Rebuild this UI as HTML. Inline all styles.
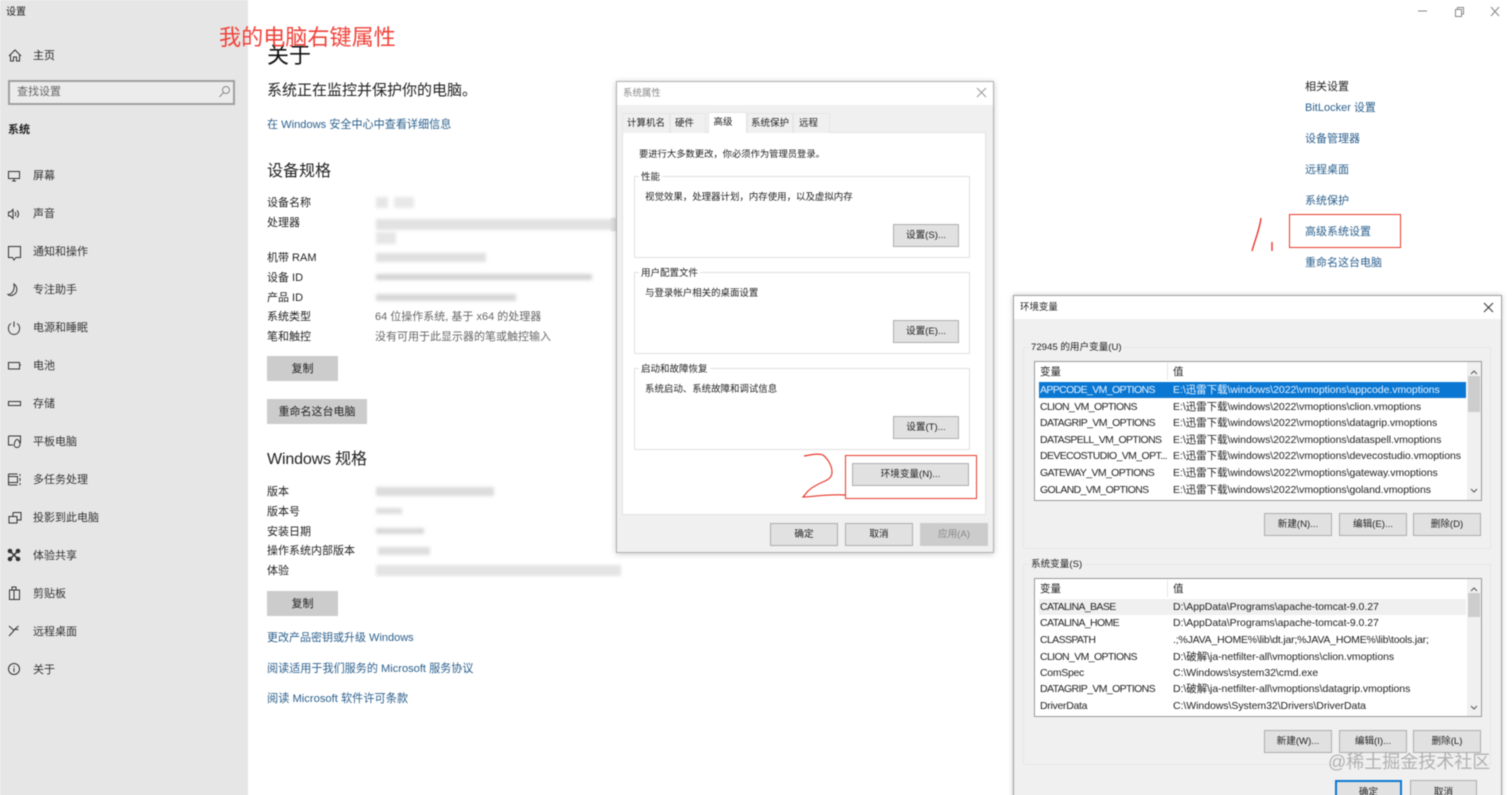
<!DOCTYPE html>
<html lang="zh-CN"><head><meta charset="utf-8"><title>设置</title>
<style>
html,body{margin:0;padding:0;width:1512px;height:795px;overflow:hidden;background:#fff}
#r{position:relative;width:1520px;height:803px;overflow:hidden;font-family:"Liberation Sans","Noto Sans CJK SC",sans-serif;color:#222;filter:blur(.5px);background:#fff}
#r div,#r svg{position:absolute}
.t{white-space:nowrap;line-height:20px;height:20px;font-size:11px;transform:translateY(1px)}
.d{font-size:9.450px;transform:translateY(2px)}
.d2{transform:translateY(1px)}
.l{color:#2b5f8c}
.g{color:#666}
.n{color:#333;left:33px}
.b{background:#e1e1e1;border:1px solid #adadad;box-sizing:border-box;text-align:center;font-size:9.600px;line-height:22px;height:23px;white-space:nowrap;color:#222}
.s{background:#ccc;text-align:center;font-size:11px;line-height:26px;height:25px;color:#222;white-space:nowrap}
.gr{border:1px solid #e0e0e0;box-sizing:border-box}
.lg{font-size:9.500px;line-height:14px;height:14px;white-space:nowrap;padding:0 2px;color:#222;transform:translateY(1px)}
.lg2{font-size:9.600px;transform:translateY(1px)}
.tab{background:#f0f0f0;border:1px solid #e6e6e6;border-bottom:0;box-sizing:border-box;font-size:9.500px;line-height:19px;text-align:center;white-space:nowrap;height:20px}
.w{font-size:10.500px;line-height:16px;height:16px;white-space:nowrap;color:#222;letter-spacing:-.05px}
.c{letter-spacing:-.62px}
.bl{filter:blur(1.6px)}
</style></head><body><div id="r">

<div style="left:0;top:0;width:248px;height:803px;background:#e6e6e6"></div>
<div class="t" style="left:6px;top:2px;font-size:10px">设置</div>

<div class="t" style="left:33px;top:45px">主页</div>
<div style="left:8px;top:80px;width:227px;height:25px;border:2px solid #a0a0a0;background:#ececec;box-sizing:border-box"></div>
<div class="t" style="left:17px;top:81px;color:#666">查找设置</div>
<svg style="left:218px;top:85px" width="14" height="14" fill="none" stroke="#8a8a8a"><circle cx="8" cy="5" r="3.500"/><path d="M5.500 7.500 1.500 12"/></svg>

<svg style="left:0;top:0" width="30" height="690" viewBox="0 0 30 690" fill="none" stroke="#333" stroke-width="1">
<path d="M9 56 15 50 21 56M10.500 55V61H13.500V57H16.500V61H19.500V55"/>
<path d="M8.500 171.500H19.500V178.500H8.500ZM12 181H16M14 179V181"/>
<path d="M8.500 212V216H10.500L13 218.500V209.500L10.500 212ZM15 212C16 213 16 215 15 216M17 210.500C19 212.500 19 215.500 17 217.500"/>
<path d="M8.500 246.500H20.500V257.500H16L14 260 12.500 257.500H8.500Z"/>
<path d="M14 284C18 287 18 293 13 295 11 296 9 295.500 8 294.500 12 294.500 15 290 14 284Z"/>
<path d="M11 323.500C6.500 326 8 334.500 14 334.500 20 334.500 21.500 326 17 323.500M14 321.500V327"/>
<path d="M8.500 362.500H19.500V369H8.500ZM19.500 365H21"/>
<path d="M8.500 401.500H20.500V405.500H8.500Z"/>
<path d="M8.500 436H20.500V443M8.500 436V445H13M15 441.500C17 437 19.500 441 20 443.500 20.500 448 15 449 14 445Z"/>
<path d="M8.500 474H17.500M8.500 485H17.500M8.500 474V485M17.500 476.500V482.500H8.500V476.500ZM20 474V476M20 478V481M20 483V485"/>
<path d="M13 512.500H21V520H17M9 516.500H17V523H9ZM13 512.500V516.500"/>
<path d="M11 552 17 558M17 552 11 558" stroke-width="1.500"/>
<circle cx="10" cy="551" r="1.800" fill="#333"/><circle cx="18" cy="551" r="1.800" fill="#333"/><circle cx="10" cy="559" r="1.800" fill="#333"/><circle cx="18" cy="559" r="1.800" fill="#333"/>
<path d="M9.500 590H19.500V599.500H9.500ZM12 590V587H16V590M14 590V599.500"/>
<path d="M9 626 14 630.500 9 636M18.500 626 14.500 629.500 18.500 629.500"/>
<circle cx="14" cy="669" r="5.500"/><path d="M14 668V672M14 666V667"/>
</svg>

<div class="t" style="left:8px;top:119px;font-weight:bold;font-size:11px">系统</div>
<div class="t n" style="top:165px">屏幕</div>
<div class="t n" style="top:203px">声音</div>
<div class="t n" style="top:241px">通知和操作</div>
<div class="t n" style="top:279px">专注助手</div>
<div class="t n" style="top:317px">电源和睡眠</div>
<div class="t n" style="top:355px">电池</div>
<div class="t n" style="top:393px">存储</div>
<div class="t n" style="top:431px">平板电脑</div>
<div class="t n" style="top:469px">多任务处理</div>
<div class="t n" style="top:507px">投影到此电脑</div>
<div class="t n" style="top:545px">体验共享</div>
<div class="t n" style="top:583px">剪贴板</div>
<div class="t n" style="top:621px">远程桌面</div>
<div class="t n" style="top:659px">关于</div>

<div class="t" style="left:267px;top:45px;font-size:22px;color:#111">关于</div>
<div class="t" style="left:219px;top:27px;font-size:22.100px;color:#f0423a;line-height:20px">我的电脑右键属性</div>
<div class="t" style="left:267px;top:80px;font-size:15px">系统正在监控并保护你的电脑。</div>
<div class="t l" style="left:267px;top:113.500px;font-size:11.100px">在 Windows 安全中心中查看详细信息</div>
<div class="t" style="left:267px;top:161px;font-size:16px">设备规格</div>
<div class="t" style="left:267px;top:192px">设备名称</div>
<div class="t" style="left:267px;top:212px">处理器</div>
<div class="t" style="left:267px;top:247px">机带 RAM</div>
<div class="t" style="left:267px;top:267px">设备 ID</div>
<div class="t" style="left:267px;top:287px">产品 ID</div>
<div class="t" style="left:267px;top:306px">系统类型</div>
<div class="t" style="left:267px;top:326px">笔和触控</div>
<div class="t g" style="left:375px;top:306px">64 位操作系统, 基于 x64 的处理器</div>
<div class="t g" style="left:375px;top:326px">没有可用于此显示器的笔或触控输入</div>

<div class="bl" style="left:376px;top:197px;width:12px;height:11px;background:#e6e6e6"></div>
<div class="bl" style="left:394px;top:197px;width:20px;height:11px;background:#e8e8e8"></div>
<div class="bl" style="left:376px;top:219px;width:240px;height:11px;background:#e2e2e2"></div>
<div class="bl" style="left:376px;top:232px;width:20px;height:12px;background:#e6e6e6"></div>
<div class="bl" style="left:376px;top:253px;width:110px;height:9px;background:#e0e0e0"></div>
<div class="bl" style="left:376px;top:274px;width:216px;height:6px;background:#d4d4d4"></div>
<div class="bl" style="left:376px;top:294px;width:140px;height:7px;background:#d8d8d8"></div>

<div class="s" style="left:267px;top:356px;width:71px">复制</div>
<div class="s" style="left:267px;top:399px;width:100px">重命名这台电脑</div>

<div class="t" style="left:267px;top:449px;font-size:16px;letter-spacing:-.15px">Windows 规格</div>
<div class="t" style="left:267px;top:481px">版本</div>
<div class="t" style="left:267px;top:501px">版本号</div>
<div class="t" style="left:267px;top:521px">安装日期</div>
<div class="t" style="left:267px;top:540px">操作系统内部版本</div>
<div class="t" style="left:267px;top:560px">体验</div>

<div class="bl" style="left:376px;top:487px;width:118px;height:9px;background:#dcdcdc"></div>
<div class="bl" style="left:376px;top:508px;width:26px;height:6px;background:#dedede"></div>
<div class="bl" style="left:376px;top:528px;width:48px;height:6px;background:#d8d8d8"></div>
<div class="bl" style="left:378px;top:547px;width:52px;height:8px;background:#dedede"></div>
<div class="bl" style="left:376px;top:565px;width:245px;height:11px;background:#e4e4e4"></div>

<div class="s" style="left:267px;top:591px;width:71px">复制</div>
<div class="t l" style="left:267px;top:627px">更改产品密钥或升级 Windows</div>
<div class="t l" style="left:267px;top:658px;font-size:11.100px">阅读适用于我们服务的 Microsoft 服务协议</div>
<div class="t l" style="left:267px;top:688px;font-size:11.200px">阅读 Microsoft 软件许可条款</div>

<div style="left:611px;top:218px;width:6px;height:13px;background:#e0e0e0"></div>

<!-- System properties dialog -->
<div style="left:616px;top:81px;width:378px;height:472px;background:#f0f0f0;border:1px solid #b0b0b0;box-sizing:border-box;box-shadow:0 1px 6px rgba(0,0,0,.22)"></div>
<div style="left:617px;top:82px;width:376px;height:23px;background:#fff"></div>
<div class="t d" style="left:623px;top:82px;color:#888">系统属性</div>
<svg style="left:976px;top:87px" width="11" height="11" stroke="#999" fill="none"><path d="M1 1 10 10M10 1 1 10"/></svg>
<div style="left:622px;top:132px;width:364px;height:383px;background:#fff;border:1px solid #e2e2e2;box-sizing:border-box"></div>
<div class="tab" style="left:622px;top:113px;width:48px">计算机名</div>
<div class="tab" style="left:670px;top:113px;width:36px;padding-right:7px">硬件</div>
<div class="tab" style="left:708px;top:112px;width:39px;height:21px;background:#fff;padding-right:9px">高级</div>
<div class="tab" style="left:747px;top:113px;width:46px">系统保护</div>
<div class="tab" style="left:793px;top:113px;width:37px;padding-right:6px">远程</div>
<div class="t d" style="left:639px;top:142px;font-size:9.300px">要进行大多数更改，你必须作为管理员登录。</div>

<div class="gr" style="left:634px;top:176px;width:336px;height:82px"></div>
<div class="lg" style="left:639px;top:170px;background:#fff">性能</div>
<div class="t d" style="left:645px;top:186px">视觉效果，处理器计划，内存使用，以及虚拟内存</div>
<div class="b" style="left:893px;top:224px;width:66px">设置(S)...</div>

<div class="gr" style="left:634px;top:272px;width:336px;height:82px"></div>
<div class="lg" style="left:639px;top:266px;background:#fff">用户配置文件</div>
<div class="t d" style="left:645px;top:282px">与登录帐户相关的桌面设置</div>
<div class="b" style="left:893px;top:320px;width:66px">设置(E)...</div>

<div class="gr" style="left:634px;top:368px;width:336px;height:82px"></div>
<div class="lg" style="left:639px;top:362px;background:#fff">启动和故障恢复</div>
<div class="t d" style="left:645px;top:378px">系统启动、系统故障和调试信息</div>
<div class="b" style="left:893px;top:416px;width:66px">设置(T)...</div>

<div class="b" style="left:852px;top:463px;width:117px">环境变量(N)...</div>
<div class="b" style="left:770px;top:523px;width:68px">确定</div>
<div class="b" style="left:845px;top:523px;width:68px">取消</div>
<div class="b" style="left:920px;top:523px;width:68px;background:#ccc;border-color:#ccc;color:#888">应用(A)</div>

<div style="left:845px;top:455px;width:132px;height:44px;border:1.500px solid #e8382c;box-sizing:border-box"></div>
<svg style="left:0;top:0" width="1512" height="795" fill="none" stroke="#e8382c" stroke-width="1.200">
<path d="M804 456C810 455 818 453 823 455 828 459 832 466 832 472 832 477 829 479 825 481 818 484 812 487 808 491L803 497C812 497 825 494 845 495"/>
<path d="M1261 218C1260 228 1255 240 1252 251M1272 242V251" stroke-width="1.400"/>
</svg>

<!-- Right panel -->
<svg style="left:1415px;top:5px" width="90" height="14" fill="none" stroke="#888"><path d="M3 6H12"/><path d="M40.500 4.500H46.500V11.500H40.500ZM42.500 4.500V2.500H48.500V9H46.500"/><path d="M76 2 84 11M84 2 76 11"/></svg>
<div class="t" style="left:1305px;top:75.500px">相关设置</div>
<div class="t l" style="left:1305px;top:96.500px">BitLocker 设置</div>
<div class="t l" style="left:1305px;top:127.500px">设备管理器</div>
<div class="t l" style="left:1305px;top:158.500px">远程桌面</div>
<div class="t l" style="left:1305px;top:189.500px">系统保护</div>
<div class="t l" style="left:1305px;top:220.500px">高级系统设置</div>
<div class="t l" style="left:1305px;top:251.500px">重命名这台电脑</div>
<div style="left:1289px;top:214px;width:112px;height:34px;border:1.500px solid #e8382c;box-sizing:border-box"></div>

<!-- Environment variables dialog -->
<div style="left:1013px;top:295px;width:489px;height:520px;background:#f0f0f0;border:1px solid #a0a0a0;box-sizing:border-box;box-shadow:0 0 5px rgba(0,0,0,.22)"></div>
<div style="left:1014px;top:296px;width:487px;height:23px;background:#fff"></div>
<div class="t d d2" style="left:1020px;top:297px">环境变量</div>
<svg style="left:1483px;top:302px" width="11" height="11" stroke="#333" fill="none"><path d="M1 1 10 10M10 1 1 10"/></svg>

<div class="gr" style="left:1023px;top:347px;width:468px;height:202px;border-color:#e6e6e6"></div>
<div class="lg lg2" style="left:1029px;top:340px;background:#f0f0f0">72945 的用户变量(U)</div>
<div style="left:1034px;top:361px;width:448px;height:140px;background:#fff;border:1px solid #999;box-sizing:border-box"></div>
<div style="left:1167px;top:363px;width:1px;height:17px;background:#e5e5e5"></div>
<div class="w" style="left:1040px;top:364px">变量</div><div class="w" style="left:1173px;top:364px">值</div>
<div style="left:1039px;top:382px;width:427px;height:16px;background:#0a78d2"></div>
<div style="left:1467px;top:362px;width:14px;height:138px;background:#f0f0f0"></div>
<div style="left:1468px;top:376px;width:12px;height:36px;background:#cdcdcd"></div>
<svg style="left:1468px;top:365px" width="12" height="132" fill="none" stroke="#555"><path d="M3 9 6 6 9 9M3 124 6 127 9 124"/></svg>
<div class="w c" style="left:1040px;top:382px;color:#e8f2ff">APPCODE_VM_OPTIONS</div><div class="w" style="left:1173px;top:382px;color:#e8f2ff">E:\迅雷下载\windows\2022\vmoptions\appcode.vmoptions</div>
<div class="w c" style="left:1040px;top:399px">CLION_VM_OPTIONS</div><div class="w" style="left:1173px;top:399px">E:\迅雷下载\windows\2022\vmoptions\clion.vmoptions</div>
<div class="w c" style="left:1040px;top:415px">DATAGRIP_VM_OPTIONS</div><div class="w" style="left:1173px;top:415px">E:\迅雷下载\windows\2022\vmoptions\datagrip.vmoptions</div>
<div class="w c" style="left:1040px;top:432px">DATASPELL_VM_OPTIONS</div><div class="w" style="left:1173px;top:432px">E:\迅雷下载\windows\2022\vmoptions\dataspell.vmoptions</div>
<div class="w c" style="left:1040px;top:448px">DEVECOSTUDIO_VM_OPT...</div><div class="w" style="left:1173px;top:448px">E:\迅雷下载\windows\2022\vmoptions\devecostudio.vmoptions</div>
<div class="w c" style="left:1040px;top:465px">GATEWAY_VM_OPTIONS</div><div class="w" style="left:1173px;top:465px">E:\迅雷下载\windows\2022\vmoptions\gateway.vmoptions</div>
<div class="w c" style="left:1040px;top:482px">GOLAND_VM_OPTIONS</div><div class="w" style="left:1173px;top:482px">E:\迅雷下载\windows\2022\vmoptions\goland.vmoptions</div>
<div class="b" style="left:1264px;top:513px;width:68px">新建(N)...</div>
<div class="b" style="left:1339px;top:513px;width:68px">编辑(E)...</div>
<div class="b" style="left:1413px;top:513px;width:68px">删除(D)</div>

<div class="gr" style="left:1023px;top:564px;width:468px;height:201px;border-color:#e6e6e6"></div>
<div class="lg lg2" style="left:1029px;top:557px;background:#f0f0f0">系统变量(S)</div>
<div style="left:1034px;top:578px;width:448px;height:139px;background:#fff;border:1px solid #999;box-sizing:border-box"></div>
<div style="left:1167px;top:580px;width:1px;height:17px;background:#e5e5e5"></div>
<div class="w" style="left:1040px;top:581px">变量</div><div class="w" style="left:1173px;top:581px">值</div>
<div style="left:1039px;top:599px;width:427px;height:16px;background:#f0f0f0"></div>
<div style="left:1467px;top:579px;width:14px;height:137px;background:#f0f0f0"></div>
<div style="left:1468px;top:593px;width:12px;height:24px;background:#cdcdcd"></div>
<svg style="left:1468px;top:582px" width="12" height="132" fill="none" stroke="#555"><path d="M3 9 6 6 9 9M3 124 6 127 9 124"/></svg>
<div class="w c" style="left:1040px;top:599px">CATALINA_BASE</div><div class="w" style="left:1173px;top:599px">D:\AppData\Programs\apache-tomcat-9.0.27</div>
<div class="w c" style="left:1040px;top:615px">CATALINA_HOME</div><div class="w" style="left:1173px;top:615px">D:\AppData\Programs\apache-tomcat-9.0.27</div>
<div class="w c" style="left:1040px;top:632px">CLASSPATH</div><div class="w" style="left:1173px;top:632px;letter-spacing:-.2px">.;%JAVA_HOME%\lib\dt.jar;%JAVA_HOME%\lib\tools.jar;</div>
<div class="w c" style="left:1040px;top:649px">CLION_VM_OPTIONS</div><div class="w" style="left:1173px;top:649px">D:\破解\ja-netfilter-all\vmoptions\clion.vmoptions</div>
<div class="w" style="left:1040px;top:665px;letter-spacing:-.3px">ComSpec</div><div class="w" style="left:1173px;top:665px">C:\Windows\system32\cmd.exe</div>
<div class="w c" style="left:1040px;top:681px">DATAGRIP_VM_OPTIONS</div><div class="w" style="left:1173px;top:681px">D:\破解\ja-netfilter-all\vmoptions\datagrip.vmoptions</div>
<div class="w" style="left:1040px;top:698px;letter-spacing:-.3px">DriverData</div><div class="w" style="left:1173px;top:698px">C:\Windows\System32\Drivers\DriverData</div>
<div class="b" style="left:1264px;top:730px;width:68px">新建(W)...</div>
<div class="b" style="left:1339px;top:730px;width:68px">编辑(I)...</div>
<div class="b" style="left:1413px;top:730px;width:68px">删除(L)</div>
<div class="b" style="left:1335px;top:780px;width:67px;border:2px solid #0a78d2;line-height:22px">确定</div>
<div class="b" style="left:1410px;top:780px;width:67px;line-height:24px">取消</div>
<div class="t" style="left:1328px;top:751px;font-size:18px;color:rgba(150,150,150,.7)">@稀土掘金技术社区</div>

</div></body></html>
